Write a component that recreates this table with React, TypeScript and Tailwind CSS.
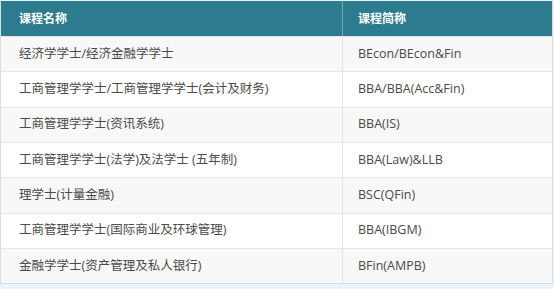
const rows: [string, string][] = [
  ['经济学学士/经济金融学学士', 'BEcon/BEcon&Fin'],
  ['工商管理学学士/工商管理学学士(会计及财务)', 'BBA/BBA(Acc&Fin)'],
  ['工商管理学学士(资讯系统)', 'BBA(IS)'],
  ['工商管理学学士(法学)及法学士 (五年制)', 'BBA(Law)&LLB'],
  ['理学士(计量金融)', 'BSC(QFin)'],
  ['工商管理学学士(国际商业及环球管理)', 'BBA(IBGM)'],
  ['金融学学士(资产管理及私人银行)', 'BFin(AMPB)'],
];

export default function App() {
  return (
    <div
      className="w-[554px] h-[289px] bg-[#eaf4fc] pt-px pr-px"
      style={{ fontFamily: '"Open Sans", "Noto Sans CJK SC", sans-serif' }}
    >
      <div className="border border-t-0 border-[#dcdcdc] bg-white">
        {/* Header */}
        <div className="flex h-[35px] bg-[#2c7b8e] text-white text-[12px] font-bold">
          <div className="w-[342px] flex items-center pl-[18px] border-r border-[#6fa7b4]">
            课程名称
          </div>
          <div className="flex-1 flex items-center pl-[15px]">课程简称</div>
        </div>

        {/* Body */}
        {rows.map(([name, abbr], i) => (
          <div
            key={abbr}
            className={`flex h-[35.33px] text-[12.5px] text-[#4a4a4a] border-t border-[#e6e6e6] ${
              i % 2 === 0 ? 'bg-[#f8f8f8]' : 'bg-white'
            }`}
          >
            <div className="w-[342px] flex items-center pl-[18px] border-r border-[#e6e6e6]">
              {name}
            </div>
            <div className="flex-1 flex items-center pl-[15px]">{abbr}</div>
          </div>
        ))}
      </div>
    </div>
  );
}
